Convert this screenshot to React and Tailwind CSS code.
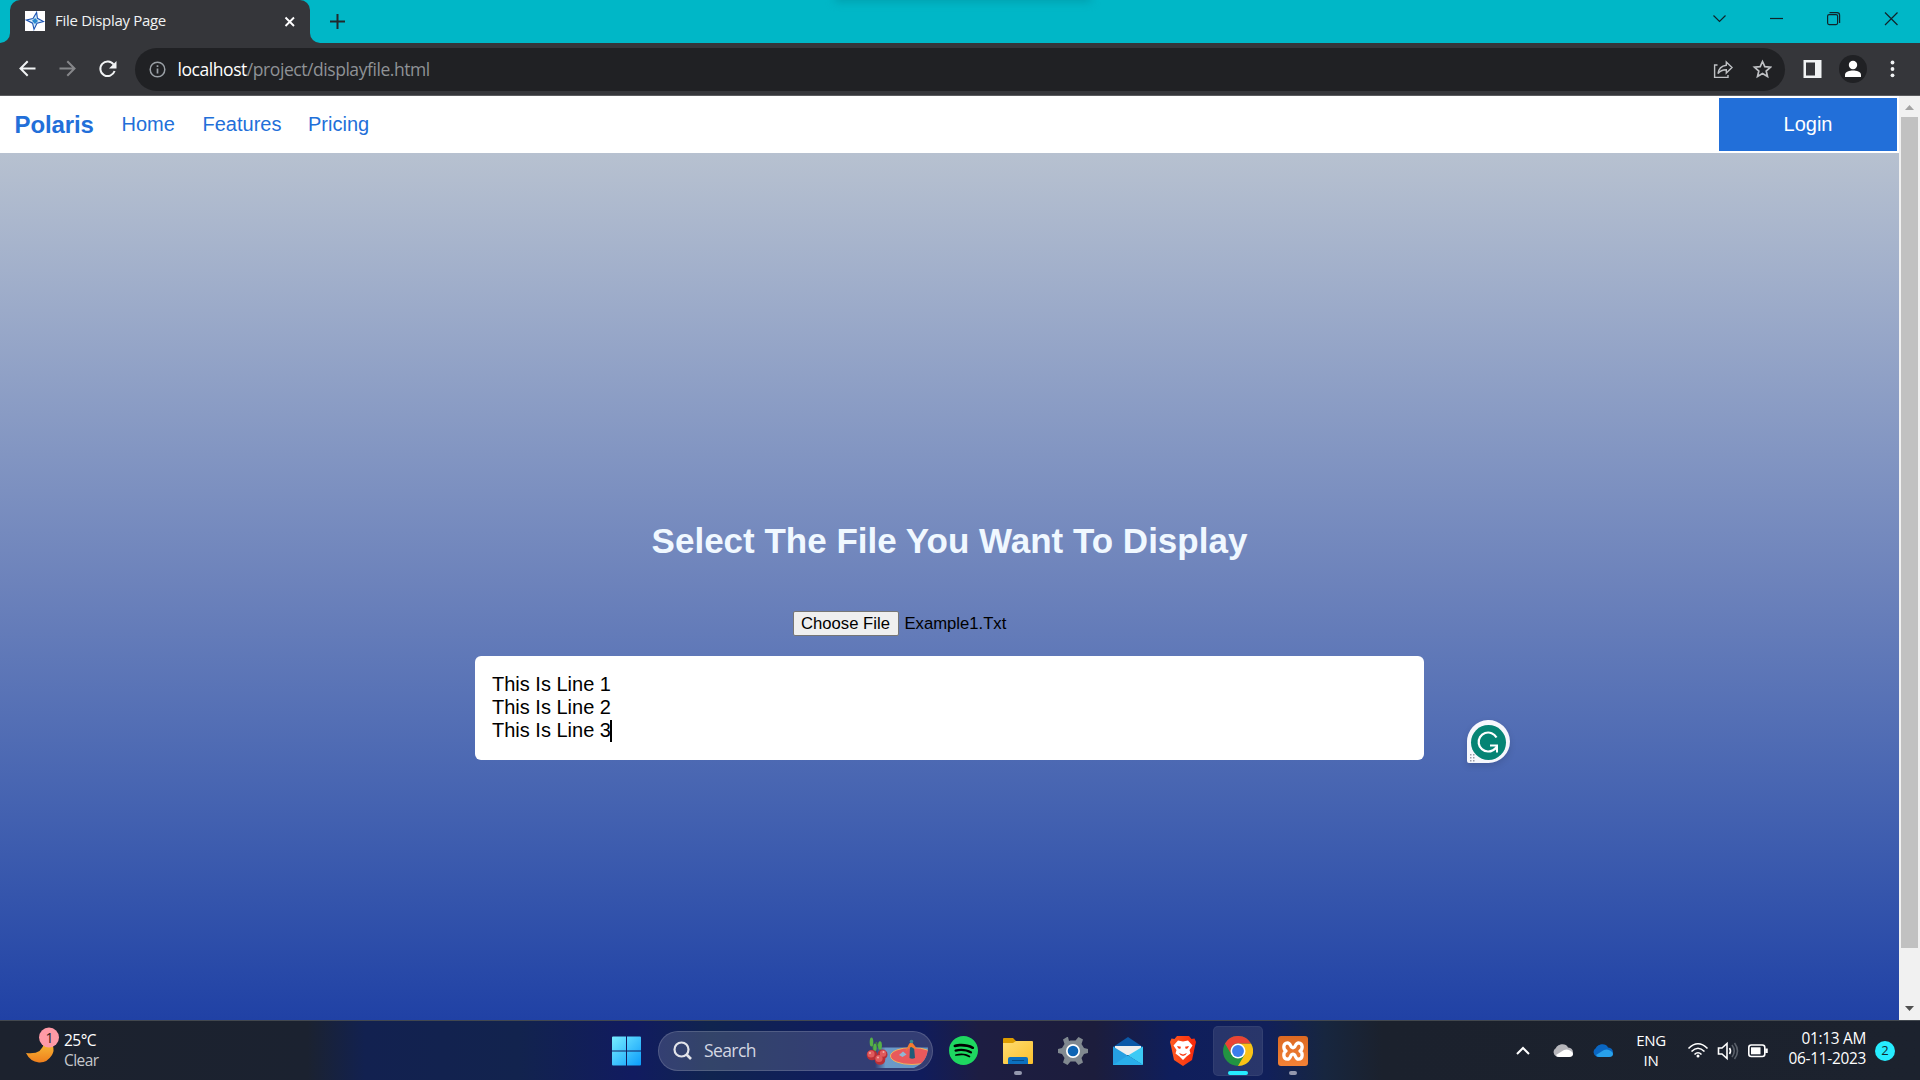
import { SiSpotify } from "react-icons/si";

const ui = "font-['Open_Sans','Noto_Sans',sans-serif]";
const arial = "font-['Liberation_Sans',Arial,sans-serif]";

function TabStrip() {
  return (
    <div className="relative flex h-[43px] overflow-hidden bg-[#00b7c7]">
      <div className="absolute left-[835px] -top-[8px] h-[10px] w-[256px] bg-[#009fae] blur-[4px]" />
      <div className="flex w-[10px] items-end bg-[#35363a]">
        <div className="h-full w-full rounded-br-[10px] bg-[#00b7c7]" />
      </div>
      <div className="flex w-[300px] items-center rounded-t-[10px] bg-[#35363a] pl-[15px] pr-[12px]">
        <svg width="20" height="20" viewBox="0 0 20 20" className="-mt-px shrink-0">
          <rect width="20" height="20" fill="#fff" />
          <path d="M11.600 1.400 L12.400 7.300 L18.600 10.600 L12 12.200 L9 18.400 L7.600 12.200 L1.400 9 L8 7.600 Z" fill="#d8ecf8" stroke="#1d55b4" strokeWidth="1.100" />
          <path d="M10.200 7 L13 10 L10 13 L7 9.800 Z" fill="#2a8ad0" />
        </svg>
        <span className={`${ui} -mt-[3px] ml-[10px] flex-1 whitespace-nowrap text-[15px] tracking-[-0.3px] text-[#f1f3f4]`}>File Display Page</span>
        <svg width="16" height="16" viewBox="0 0 16 16" fill="none" stroke="#fff" strokeWidth="1.900"><path d="M3.500 3.500l8.500 8.500M12 3.500L3.500 12" /></svg>
      </div>
      <div className="w-[10px] bg-[#35363a]"><div className="h-full w-full rounded-bl-[10px] bg-[#00b7c7]" /></div>
      <svg width="18" height="43" viewBox="0 0 18 43" className="ml-[8px]" fill="none" stroke="#20292c" strokeWidth="2"><path d="M9.500 14v15M2 21.500h15" /></svg>
      <div className="flex-1" />
      <svg width="220" height="43" viewBox="1700 0 220 43" fill="none" stroke="#10242a" strokeWidth="1.200">
        <path d="M1713.500 15.500l6 6 6-6" />
        <path d="M1770 18.500h13" />
        <rect x="1827.600" y="14.600" width="10" height="10" rx="1.500" />
        <path d="M1829.500 12.600h7.500q2.600 0 2.600 2.600V23" />
        <path d="M1885 12.500l12.500 12.500M1897.500 12.500L1885 25" />
      </svg>
    </div>
  );
}

function Toolbar() {
  return (
    <div className="flex h-[53px] items-start border-b border-[#5a5b5e] bg-[#35363a] pt-[5px]">
      <svg width="135" height="43" viewBox="0 48 135 43" fill="none" strokeWidth="2" className="shrink-0">
        <path d="M35.500 68.500H20.500M27.700 61.300l-7.200 7.200 7.200 7.200" stroke="#f1f3f4" />
        <path d="M59.500 68.500h15M67.300 61.300l7.200 7.200-7.200 7.200" stroke="#86878a" />
        <path d="M113.600 64.500A7.300 7.300 0 1 0 114.600 71" stroke="#f1f3f4" />
        <path d="M116.500 61v7.500H109z" fill="#f1f3f4" />
      </svg>
      <div className="flex h-[43px] w-[1650px] items-center rounded-full bg-[#202124] pl-[14px] pr-[13px]">
        <svg width="17" height="17" viewBox="0 0 17 17" fill="none" stroke="#9aa0a6" strokeWidth="1.500" className="shrink-0">
          <circle cx="8.500" cy="8.500" r="7.300" /><path d="M8.500 7.500v5M8.500 4.300v1.800" strokeWidth="1.700" />
        </svg>
        <div className={`${ui} -mt-px ml-[11.500px] flex-1 whitespace-nowrap text-[17.500px] tracking-[-0.440px] text-[#8f9296]`}>
          <span className="text-white">localhost</span>/project/displayfile.html
        </div>
        <svg width="60" height="43" viewBox="1712 48 60 43" fill="none" stroke="#bfc1c4" strokeWidth="1.400">
          <path d="M1717.500 65H1714.600V77.400H1728V75" />
          <path d="M1726.300 62l5.700 5.500-5.700 5.500v-3.300c-4 0-6.500 1.300-8.300 4 .5-4.500 3-7.800 8.300-8.500z" />
          <path d="M1762.500 61.500l2.300 5.200 5.700.5-4.300 3.800 1.300 5.600-5-3-5 3 1.300-5.600-4.300-3.800 5.700-.5z" strokeWidth="1.700" />
        </svg>
      </div>
      <svg width="120" height="43" viewBox="1785 48 120 43">
        <rect x="1803.500" y="60" width="18" height="18" fill="#f1f3f4" /><rect x="1806" y="62.500" width="9" height="13" fill="#35363a" />
        <circle cx="1853" cy="69" r="14" fill="#202124" />
        <circle cx="1853" cy="65" r="4.200" fill="#fff" /><path d="M1845 77v-2.300c0-3 4.700-4.200 8-4.200s8 1.200 8 4.200V77z" fill="#fff" />
        <g fill="#f1f3f4"><circle cx="1892.500" cy="62.500" r="1.900" /><circle cx="1892.500" cy="69" r="1.900" /><circle cx="1892.500" cy="75.300" r="1.900" /></g>
      </svg>
    </div>
  );
}

function Page() {
  return (
    <div className={`${arial} flex min-h-0 flex-1`}>
      <div className="flex flex-1 flex-col">
        <nav className="flex h-[57px] items-center bg-white pl-[14.500px] pr-[2px] text-[20px] text-[#226fd9]">
          <span className="w-[107px] text-[24px] font-bold tracking-[-0.100px]">Polaris</span>
          <span className="-mt-px w-[81px]">Home</span>
          <span className="-mt-px w-[105.500px]">Features</span>
          <span className="-mt-px">Pricing</span>
          <div className="ml-auto flex h-[53px] w-[178px] items-center justify-center bg-[#226fd9] pb-px text-white">Login</div>
        </nav>
        <main className="flex flex-1 flex-col items-center bg-linear-to-b from-[#b7c1d0] via-[#6c82bb] via-50% to-[#2041a5]">
          <h1 className="mt-[366px] whitespace-nowrap text-[35px] font-bold leading-[44px] text-[#f0f8ff]">Select The File You Want To Display</h1>
          <div className="mt-[48px] flex h-[25px] w-[314px] items-center text-[16.667px]">
            <button className="h-[25px] w-[106px] whitespace-nowrap rounded-[2px] border border-[#767676] bg-[#efefef] leading-[23px] text-black">Choose File</button>
            <span className="ml-[6px] text-black">Example1.Txt</span>
          </div>
          <div className="relative mt-[20px] h-[104px] w-[949px] rounded-[6px] bg-white px-[17px] pt-[17px] text-[20px] leading-[23px] text-black">
            <p>This Is Line 1</p><p>This Is Line 2</p>
            <p className="flex items-center">This Is Line 3<span className="-ml-px h-[22px] w-[2px] bg-black" /></p>
            <svg width="56" height="56" viewBox="1460 714 56 56" className="absolute left-[985px] top-[58px] drop-shadow-md">
              <path d="M1467 761V742.500A21.500 21.500 0 1 1 1488.500 763H1469q-2 0-2-2z" fill="#f6f7fc" />
              <circle cx="1488.500" cy="742.500" r="17.500" fill="#058474" />
              <path d="M1496.500 737.500A9.500 9.500 0 1 0 1488 751.500Q1493.500 751.500 1497 746.500" fill="none" stroke="#fff" strokeWidth="2.200" />
              <path d="M1490 745.500H1497V752.500" fill="none" stroke="#fff" strokeWidth="2" />
              <path fill="#9a9da8" d="M1470 754h1.500v1.500h-1.500zM1473 754h1.500v1.500h-1.500zM1470 757h1.500v1.500h-1.500zM1473 757h1.500v1.500h-1.500zM1470 760h1.500v1.500h-1.500zM1473 760h1.500v1.500h-1.500z" />
            </svg>
          </div>
        </main>
      </div>
      <div className="flex w-[21px] flex-col items-center bg-[#f1f1f1]">
        <svg width="21" height="21" viewBox="0 0 21 21"><path d="M6 14h9l-4.500-5z" fill="#a3a3a3" /></svg>
        <div className="h-[831px] w-[17px] bg-[#c1c1c1]" />
        <div className="flex-1" />
        <svg width="21" height="21" viewBox="0 0 21 21"><path d="M6 7h9l-4.500 5z" fill="#505050" /></svg>
      </div>
    </div>
  );
}

function SearchArt() {
  return (
    <svg width="67" height="36" viewBox="862 1032 67 36">
      <defs>
        <linearGradient id="court" x1="0" x2="1"><stop offset="0" stopColor="#6c9ac8" stopOpacity="0" /><stop offset=".2" stopColor="#6c9ac8" /><stop offset="1" stopColor="#6596c4" /></linearGradient>
        <clipPath id="courtClip"><path d="M876 1046.500H929Q928.500 1061 915 1067H876z" /></clipPath>
      </defs>
      <g clipPath="url(#courtClip)">
        <rect x="876" y="1046" width="53" height="22" fill="url(#court)" />
        <ellipse cx="913" cy="1055" rx="21.500" ry="8.500" fill="#e9595c" stroke="#eeb45d" />
      </g>
      <path d="M911 1046l4 0 1 11q-3 1.500-5.500 0z" fill="#205c78" />
      <path d="M907 1049l3-6q1-2 3.500-1l4 5-2 1-3-2-3 1-2 3z" fill="#f47b30" />
      <circle cx="912.500" cy="1040.500" r="1.800" fill="#3b8a90" /><path d="M900 1054l4-3.500 3.500 3-4 2.500z" fill="#91b7d4" />
      <path d="M873 1040l2 12M877 1041l6 12M880 1043l2 12" fill="none" stroke="#3b8633" strokeWidth="1.200" />
      <g fill="#55b048"><ellipse cx="872.500" cy="1041" rx="1.800" ry="4.500" /><ellipse cx="876" cy="1046.500" rx="1.700" ry="4" /><ellipse cx="881" cy="1044.500" rx="1.900" ry="4.300" /></g>
      <g fill="#b92f36"><circle cx="873" cy="1054" r="5.300" /><circle cx="883.500" cy="1053.500" r="5" /><circle cx="881" cy="1058.500" r="5.300" /></g>
      <g fill="#e05a5c"><circle cx="872" cy="1053" r="3.600" /><circle cx="884" cy="1052.500" r="3.200" /><circle cx="880" cy="1057.500" r="3.600" /></g>
      <g fill="#f3aaa6"><circle cx="871" cy="1052" r="1" /><circle cx="884.500" cy="1051" r="1" /><circle cx="879" cy="1056.500" r="1" /></g>
    </svg>
  );
}

function Chrome() {
  return (
    <svg width="30" height="30" viewBox="0 0 48 48">
      <circle cx="24" cy="24" r="24" fill="#229342" />
      <path d="M24 12H44.800A24 24 0 0 1 24 48L34.400 30z" fill="#fbc116" />
      <path d="M3.200 12L13.600 30A12 12 0 0 1 24 12H44.800A24 24 0 0 0 3.200 12z" fill="#ea4335" />
      <circle cx="24" cy="24" r="12" fill="#fff" /><circle cx="24" cy="24" r="9.500" fill="#3b7ded" />
    </svg>
  );
}

function AppSlot({ children, active, running }) {
  return (
    <div className={`relative mx-[2.450px] flex h-[50px] w-[50px] items-center justify-center rounded-[5px] ${active ? "border border-white/5 bg-white/10" : ""}`}>
      {children}
      {running && <div className={active ? "absolute bottom-0 h-[4px] w-[20px] rounded-full bg-[#26ecff]" : "absolute bottom-[1px] h-[4px] w-[8px] rounded-full bg-[#9498ae]"} />}
    </div>
  );
}

function Taskbar() {
  return (
    <footer className={`${ui} flex h-[60px] shrink-0 items-center border-t border-[#42484f] bg-[linear-gradient(90deg,#1c222e_0%,#1b2230_16%,#122150_19%,#12234e_27%,#111b60_33%,#10244f_37%,#101d5c_43%,#101c5c_48%,#1d1d42_51%,#1c1d3c_57%,#0f1e5c_61%,#11205a_66%,#17263f_69%,#1b212d_72%,#1c222e_100%)] text-white`}>
      <div className="flex w-[611px] items-center pl-[25px]">
        <svg width="36" height="40" viewBox="25 1031 36 40" className="overflow-visible">
          <defs><linearGradient id="moon" x1="0" y1="0" x2="0" y2="1"><stop offset="0" stopColor="#f9c83b" /><stop offset="1" stopColor="#ef7f1d" /></linearGradient></defs>
          <path d="M46 1038Q57 1046 52 1055Q47 1063 39 1062.500Q30 1061.500 26 1053Q42 1055 44 1043z" fill="url(#moon)" />
          <circle cx="49" cy="1037.500" r="10" fill="#ff9aa6" />
          <text x="45.500" y="1043" fontSize="14" fill="#222" fontFamily="Open Sans">1</text>
        </svg>
        <div className="-mt-[2px] ml-[3px] text-[15.500px] leading-[20px] tracking-[-0.550px]"><div>25°C</div><div className="text-[#c6c8cc]">Clear</div></div>
      </div>
      <svg width="30" height="30" viewBox="0 0 30 30" className="ml-px">
        <defs><linearGradient id="win" x1="0" y1="0" x2="1" y2="1"><stop offset="0" stopColor="#78edff" /><stop offset="1" stopColor="#0b9cfb" /></linearGradient></defs>
        <path d="M1 .5h13v14H0V1.500q0-1 1-1zM15 .5h13q1 0 1 1v13H15zM0 15.500h14v14H1q-1 0-1-1zM15 15.500h14v13q0 1-1 1H15z" fill="url(#win)" />
      </svg>
      <div className="ml-[16px] flex h-[40px] w-[275px] items-center rounded-full border border-white/15 bg-white/15 pl-[14px] pr-[4px]">
        <svg width="20" height="20" viewBox="0 0 20 20" fill="none" stroke="#e3e4ea" strokeWidth="2.200"><circle cx="8.500" cy="8.500" r="7" /><path d="M13.500 13.500l4.500 4.500" strokeWidth="2.700" /></svg>
        <span className="-mt-px ml-[11px] flex-1 text-[17.500px] tracking-[-0.600px] text-[#d4d7e2]">Search</span>
        <SearchArt />
      </div>
      <div className="ml-[2.900px] flex">
        <AppSlot><div className="flex h-[26px] w-[26px] items-center justify-center rounded-full bg-black"><SiSpotify className="size-[29px] shrink-0 text-[#1ed760]" /></div></AppSlot>
        <AppSlot running>
          <svg width="30" height="27" viewBox="0 0 30 27" className="mt-px"><defs><linearGradient id="fold" x1="0" y1="0" x2="1" y2="1"><stop offset="0" stopColor="#ffdc70" /><stop offset="1" stopColor="#fbc02d" /></linearGradient></defs><path d="M0 1q0-1 1-1h9l3 3h16v6H0z" fill="#dd9c00" /><path d="M0 5h10l3-2h16q1 0 1 1v21q0 1-1 1H1q-1 0-1-1z" fill="url(#fold)" /><path d="M5 26v-5q0-2 2-2h16q2 0 2 2v5z" fill="#0c70c0" /><path d="M9 22.500h12" stroke="#064a84" /></svg>
        </AppSlot>
        <AppSlot>
          <svg width="30" height="30" viewBox="0 0 30 30"><path d="M11 5l-1-4h-1L5 3.500 6.500 8 4 12 0 13v4l4 1 2.500 4L5 26.500 9.500 29l3-3.500h5l3 3.500 4.500-2.500L23.500 22l2.500-4 4-1v-4l-4-1-2.500-4L25 3.500 20.500 1l-3 3.500h-5z" fill="#818990" /><circle cx="15" cy="15" r="7" fill="#fff" /><circle cx="15" cy="15" r="5.300" fill="#0e64b4" /></svg>
        </AppSlot>
        <AppSlot>
          <svg width="30" height="28" viewBox="0 0 30 28"><path d="M0 10L15 0l15 10v5H0z" fill="#0b59a8" /><path d="M2 9h26v9H2z" fill="#eee" /><path d="M0 9.500L30 28H0z" fill="#259fe2" /><path d="M30 9.500V28L15 18.500z" fill="#3ccaf5" /><path d="M0 28L15 18.500 30 28z" fill="#29aeea" /></svg>
        </AppSlot>
        <AppSlot>
          <svg width="26" height="30" viewBox="0 0 26 30">
            <defs><linearGradient id="brave" x1="0" x2="1"><stop offset="0" stopColor="#ff5a20" /><stop offset="1" stopColor="#f8280c" /></linearGradient></defs>
            <path d="M7 0h12l2.500 3 3-.5L26 6l-1 4-3 14-9 6-9-6L1 10 0 6l1.500-3.500 3 .5z" fill="url(#brave)" />
            <path d="M8 4.500l5 1 5-1 4.500 5-3 4.500 1 3.500-4 3-3.500 3.500-3.500-3.500-4-3 1-3.500-3-4.500z" fill="#fff" />
            <path d="M7 10l4 .8-.8 2.200-2-.8zM19 10l-4 .8.800 2.200 2-.8zM9 17l4 1.500 4-1.500-1.500 2-2.500 1-2.500-1z" fill="#fb3d15" />
          </svg>
        </AppSlot>
        <AppSlot active running><Chrome /></AppSlot>
        <AppSlot running>
          <div className="flex size-[30px] items-center justify-center rounded-[3px] bg-linear-to-b from-[#dc6922] to-[#f38236]">
            <svg width="24" height="22" viewBox="0 0 24 22" fill="none" stroke="#fff" strokeWidth="3.300" strokeLinecap="round" strokeLinejoin="round"><path d="M5 11C2 9.500 1.800 3 6.500 2.800 10 2.800 9 7.800 12 7.800S14 2.800 17.500 2.800C22.200 3 22 9.500 19 11 22 12.500 22.200 19 17.500 19.200 14 19.200 15 14.200 12 14.200S10 19.200 6.500 19.200C1.800 19 2 12.500 5 11z" /></svg>
          </div>
        </AppSlot>
      </div>
      <div className="flex-1" />
      <svg width="100" height="40" viewBox="1515 1030 100 40">
        <path d="M1517 1053l6-6 6 6" fill="none" stroke="#fff" strokeWidth="2" />
        <path d="M1557 1056a5 5 0 0 1-1-9c1-4 10-6 12-.5q5 .5 5 5a5 5 0 0 1-4 4.500z" fill="#b6b6bb" /><path d="M1556 1054l8-5q3-1 5 0 4 2 4 4 0 3-4 3h-10q-2 0-3-2z" fill="#fff" />
        <path d="M1597 1056a5 5 0 0 1-1-9c1-4 10-6 12-.5q5 .5 5 5a5 5 0 0 1-4 4.500z" fill="#0a66c2" /><path d="M1596 1054l8-5q3-1 5 0 4 2 4 4 0 3-4 3h-10q-2 0-3-2z" fill="#28a0ea" />
      </svg>
      <div className="-mt-px ml-[15px] w-[42px] text-center text-[15px] leading-[20px] tracking-[-0.350px]">ENG<br />IN</div>
      <svg width="84" height="40" viewBox="1686 1030 84 40" className="ml-[14px]" fill="none" stroke="#fff" strokeWidth="1.600">
        <path d="M1688.500 1047.500q9.500-9.500 19 0M1691.500 1050.500q6.500-6.500 13 0M1694.500 1053.500q3.500-3.500 7 0" /><circle cx="1698" cy="1055" r="1.500" fill="#fff" stroke="none" />
        <path d="M1718.500 1047h3.500l5-4.500v15l-5-4.500h-3.500zM1729.500 1047q2 3 0 6" /><path d="M1732 1044q4.500 6 0 12M1734.500 1042q6 8 0 16" stroke="#5a606a" />
        <rect x="1748.800" y="1044" width="16" height="11.500" rx="2.500" /><rect x="1751" y="1046.300" width="9.500" height="7" fill="#fff" stroke="none" /><path d="M1766.500 1047.500v4.500" strokeWidth="2.500" />
      </svg>
      <div className="-mt-[3px] ml-[10px] w-[86px] whitespace-nowrap text-right text-[15.400px] leading-[20px] tracking-[-0.280px]"><div>01:13 AM</div><div>06-11-2023</div></div>
      <div className="ml-[9px] mr-[25px] flex size-[20px] items-center justify-center rounded-full bg-[#26ecff] text-[13px] text-[#102a30]">2</div>
    </footer>
  );
}

export default function App() {
  return (
    <div className="flex h-[1080px] w-[1920px] flex-col overflow-hidden">
      <TabStrip />
      <Toolbar />
      <Page />
      <Taskbar />
    </div>
  );
}
